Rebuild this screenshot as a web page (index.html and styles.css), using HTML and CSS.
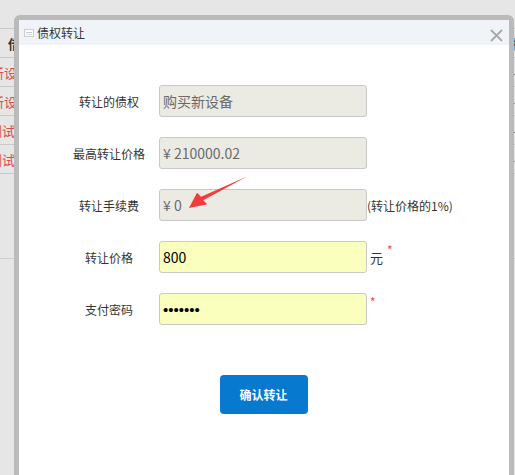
FILE: index.html
```html
<!DOCTYPE html>
<html lang="zh-CN">
<head>
<meta charset="utf-8">
<title>债权转让</title>
<link rel="stylesheet" href="styles.css">
</head>
<body>
<div class="page">
  <div class="grid">
    <div class="grid-row grid-head">
      <div class="cell-left"><span>借款标题</span></div>
      <div class="cell-right">推荐</div>
    </div>
    <div class="grid-row">
      <div class="cell-left red"><span>购买新设备</span></div>
      <div class="cell-right">—</div>
    </div>
    <div class="grid-row">
      <div class="cell-left red"><span>购买新设备</span></div>
      <div class="cell-right blue">—</div>
    </div>
    <div class="grid-row">
      <div class="cell-left red short"><span>投标测试</span></div>
      <div class="cell-right">—</div>
    </div>
    <div class="grid-row">
      <div class="cell-left red short"><span>投标测试</span></div>
      <div class="cell-right orange">—</div>
    </div>
  </div>
  <div class="pager"></div>
</div>

<div class="dialog">
  <div class="dialog-head">
    <div class="dialog-title">
      <svg class="title-icon" width="10" height="8" viewBox="0 0 10 8"><rect x="0.5" y="0.5" width="9" height="7" fill="#fff" stroke="#c9cdd2"/><line x1="2" y1="3.5" x2="8" y2="3.5" stroke="#c9cdd2"/><line x1="2" y1="5.5" x2="8" y2="5.5" stroke="#dde0e4"/></svg>
      <span>债权转让</span>
    </div>
    <svg class="dialog-close" width="13" height="13" viewBox="0 0 13 13"><path d="M1 1 L12 12 M12 1 L1 12" stroke="#a8a8a8" stroke-width="1.8" fill="none"/></svg>
  </div>
  <div class="dialog-body">
    <div class="form-row">
      <label class="form-label">转让的债权</label>
      <input class="field field-readonly" readonly value="购买新设备">
    </div>
    <div class="form-row">
      <label class="form-label">最高转让价格</label>
      <input class="field field-readonly" readonly value="¥ 210000.02">
    </div>
    <div class="form-row">
      <label class="form-label">转让手续费</label>
      <input class="field field-readonly" readonly value="¥ 0">
      <span class="hint">(转让价格的1%)</span>
    </div>
    <div class="form-row">
      <label class="form-label">转让价格</label>
      <input class="field field-filled" value="800">
      <span class="unit">元</span>
      <span class="req req-after-unit">*</span>
    </div>
    <div class="form-row">
      <label class="form-label">支付密码</label>
      <input class="field field-filled field-password" type="password" value="1234567">
      <span class="req">*</span>
    </div>
    <div class="form-actions">
      <button class="btn-primary" type="button">确认转让</button>
    </div>
  </div>
  <svg class="callout-arrow" width="66" height="40" viewBox="0 0 66 40"><polygon points="4,36 12,20.7 16.2,24.7 62,4.5 18.2,28.3 22.3,32.3" fill="#f23b3b"/></svg>
</div>
</body>
</html>
```

FILE: styles.css
```css
html, body {
  margin: 0;
  padding: 0;
}
body {
  background: #e6e6e6;
  font-family: "Microsoft YaHei", "Noto Sans CJK SC", sans-serif;
  width: 515px;
  height: 475px;
  overflow: hidden;
  position: relative;
}

/* background page */
.page {
  padding-top: 28px;
}
.grid-row {
  display: flex;
  align-items: center;
  justify-content: space-between;
  height: 28px;
  border-bottom: 1px solid #c9c9c9;
  font-size: 13px;
}
.grid-head {
  border-top: 1px solid #c9c9c9;
  font-weight: bold;
  color: #333;
}
.cell-left {
  width: 30px;
  display: flex;
  justify-content: flex-end;
  overflow: hidden;
  white-space: nowrap;
}
.grid-head .cell-left {
  justify-content: flex-start;
  padding-left: 8px;
  width: 40px;
}
.cell-left.red {
  color: #dc4a4a;
}
.cell-left.short {
  width: 15px;
  padding-right: 15px;
}
.cell-right {
  width: 4px;
  overflow: hidden;
  white-space: nowrap;
  color: #555;
}
.cell-right.blue { color: #4a6aa0; }
.cell-right.orange { color: #b07040; }
.pager {
  height: 84px;
  border-bottom: 1px solid #cfcfcf;
}

/* dialog */
.dialog {
  position: absolute;
  left: 14px;
  top: 15px;
  width: 500px;
  height: 480px;
  box-sizing: border-box;
  border: 5px solid #bababa;
  border-radius: 6px;
  background: #fff;
}
.dialog-head {
  height: 25px;
  background: #f0f4f8;
  display: flex;
  justify-content: space-between;
  padding: 0 6px 0 5px;
}
.dialog-title {
  display: flex;
  align-items: center;
  gap: 3px;
  font-size: 12px;
  color: #333;
}
.title-icon {
  display: block;
}
.dialog-close {
  display: block;
  margin-top: 9px;
}
.dialog-body {
  padding-top: 40px;
}
.form-row {
  display: flex;
  align-items: center;
  height: 32px;
  margin-bottom: 20px;
  padding-left: 40px;
}
.form-label {
  width: 100px;
  text-align: center;
  font-size: 12px;
  color: #333;
}
.field {
  width: 208px;
  height: 32px;
  box-sizing: border-box;
  border: 1px solid #c9c9c9;
  border-radius: 3px;
  padding: 0 3px;
  margin: 0;
  font-family: "Microsoft YaHei", "Noto Sans CJK SC", sans-serif;
  font-size: 14px;
  outline: none;
}
.field-readonly {
  background: #ebebe4;
  color: #6a6a6a;
}
.field-filled {
  background: #faffbd;
  color: #000;
}
.field-password {
  font-family: "Liberation Sans", sans-serif;
  font-size: 15px;
  letter-spacing: 0;
}
.hint {
  font-size: 12px;
  color: #333;
}
.unit {
  font-size: 13px;
  color: #333;
  margin-left: 3px;
}
.req {
  align-self: flex-start;
  color: #f44;
  font-size: 12px;
  line-height: 12px;
  margin-top: 3px;
  margin-left: 3px;
}
.req-after-unit {
  margin-left: 4px;
}
.form-actions {
  display: flex;
  justify-content: center;
  margin-top: 50px;
}
.btn-primary {
  width: 88px;
  height: 39px;
  border: none;
  border-radius: 4px;
  background: #0779cf;
  color: #fff;
  font-family: "Microsoft YaHei", "Noto Sans CJK SC", sans-serif;
  font-size: 12px;
  font-weight: bold;
  padding: 0;
  margin-left: -1px;
}
.callout-arrow {
  position: absolute;
  left: 166px;
  top: 152px;
}
```
